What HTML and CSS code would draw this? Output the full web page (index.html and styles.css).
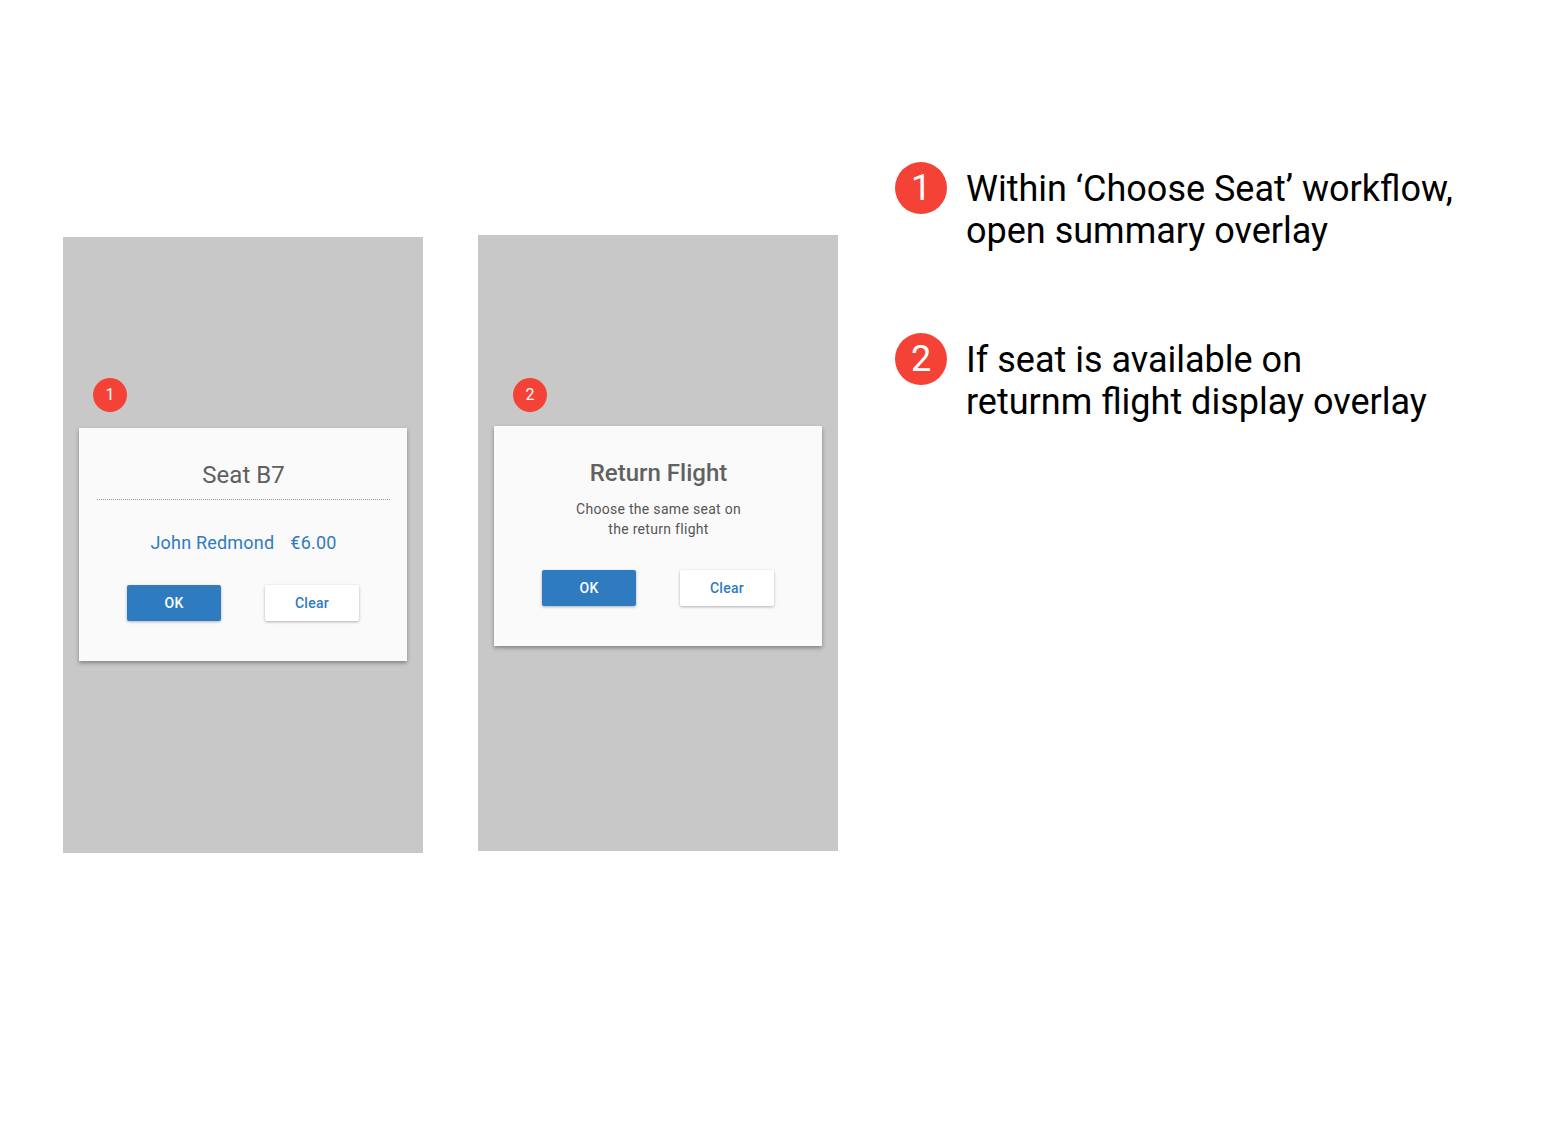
FILE: index.html
```html
<!DOCTYPE html>
<html>
<head>
<meta charset="utf-8">
<link rel="stylesheet" href="styles.css">
</head>
<body>
<div class="page">
  <div class="phone phone-1">
    <div class="badge">1</div>
    <div class="card">
      <div class="title title-rule">Seat B7</div>
      <div class="passenger"><span>John Redmond</span><span>€6.00</span></div>
      <div class="actions">
        <div class="btn btn-primary">OK</div>
        <div class="btn btn-secondary">Clear</div>
      </div>
    </div>
  </div>
  <div class="phone phone-2">
    <div class="badge">2</div>
    <div class="card">
      <div class="title title-bold">Return Flight</div>
      <div class="subtitle">Choose the same seat on<br>the return flight</div>
      <div class="actions">
        <div class="btn btn-primary">OK</div>
        <div class="btn btn-secondary">Clear</div>
      </div>
    </div>
  </div>
  <div class="notes">
    <div class="note">
      <div class="note-badge">1</div>
      <div class="note-text">Within ‘Choose Seat’ workflow,<br>open summary overlay</div>
    </div>
    <div class="note">
      <div class="note-badge">2</div>
      <div class="note-text">If seat is available on<br>returnm flight display overlay</div>
    </div>
  </div>
</div>
</body>
</html>
```

FILE: styles.css
```css
html, body {
  margin: 0;
  padding: 0;
  background: #ffffff;
  font-family: Roboto, "Liberation Sans", sans-serif;
}

.page {
  display: flex;
  align-items: flex-start;
  padding-left: 63px;
  width: 1559px;
  height: 1128px;
  box-sizing: border-box;
}

.phone {
  width: 360px;
  height: 616px;
  background: #c8c8c8;
  box-sizing: border-box;
  padding: 143px 16px 0 16px;
}

.phone-1 { margin-top: 237px; padding-top: 141px; }
.phone-2 { margin-top: 235px; margin-left: 55px; }

.badge {
  width: 34px;
  height: 34px;
  border-radius: 50%;
  background: #f44336;
  color: #fff;
  font-size: 16px;
  line-height: 34px;
  text-align: center;
  margin-left: 14px;
}

.phone-2 .badge { margin-left: 19px; }

.card {
  margin-top: 14px;
  background: #fafafa;
  box-shadow: 0 2px 4px rgba(0, 0, 0, 0.35);
  padding: 33px 17px 40px 18px;
  text-align: center;
}

.phone-1 .card { margin-top: 16px; }

.title {
  font-size: 24px;
  line-height: 28px;
  color: #5f5f5f;
}

.title-rule {
  padding-bottom: 10px;
  border-bottom: 1px dotted #9a9a9a;
}

.title-bold {
  font-weight: 500;
  color: #616161;
}

.passenger {
  margin-top: 32px;
  font-size: 18px;
  line-height: 22px;
  letter-spacing: 0.2px;
  color: #2f7bbf;
  display: flex;
  justify-content: center;
  gap: 16px;
}

.subtitle {
  margin-top: 12px;
  font-size: 14px;
  line-height: 20px;
  letter-spacing: 0.3px;
  color: #555555;
}

.actions {
  margin-top: 31px;
  display: flex;
  justify-content: center;
  gap: 44px;
  padding-right: 1px;
}

.btn {
  width: 94px;
  height: 36px;
  line-height: 36px;
  font-size: 14px;
  font-weight: 500;
  letter-spacing: 0.3px;
  text-align: center;
  border-radius: 2px;
  box-shadow: 0 1px 3px rgba(0, 0, 0, 0.3);
}

.btn-primary {
  background: #2e7bbf;
  color: #ffffff;
}

.btn-secondary {
  background: #ffffff;
  color: #2f7bbf;
}

.notes {
  margin-left: 57px;
  margin-top: 162px;
  display: flex;
  flex-direction: column;
  gap: 81px;
}

.note {
  display: flex;
  align-items: flex-start;
  gap: 19px;
}

.note-badge {
  flex: none;
  width: 52px;
  height: 52px;
  border-radius: 50%;
  background: #f44336;
  color: #fff;
  font-size: 36px;
  line-height: 52px;
  text-align: center;
}

.note-text {
  margin-top: 6px;
  font-size: 36px;
  line-height: 42px;
  color: #000;
  white-space: nowrap;
}
```
